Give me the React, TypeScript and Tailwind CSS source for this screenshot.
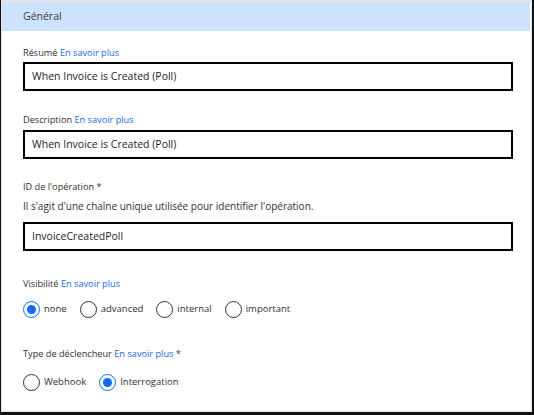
import React from "react";

const font = { fontFamily: '"Open Sans", "Noto Sans", sans-serif' };

const Link = () => <span className="text-[#1569e0]">En savoir plus</span>;

const TextField = ({ value }: { value: string }) => (
  <div className="h-[29px] w-[490px] border-2 border-black flex items-center px-[7px] text-[10.5px] text-[#201f1e]">
    {value}
  </div>
);

const Radio = ({ label, checked }: { label: string; checked?: boolean }) => (
  <label className="flex items-center gap-[4px] text-[9.5px] text-[#323130]">
    <span
      className={
        "w-[17px] h-[17px] rounded-full border-[1.5px] flex items-center justify-center " +
        (checked ? "border-[#0f6cf5]" : "border-[#323130]")
      }
    >
      {checked && <span className="w-[9px] h-[9px] rounded-full bg-[#0f6cf5]" />}
    </span>
    {label}
  </label>
);

export default function App() {
  return (
    <div
      className="w-[534px] h-[415px] bg-white border-l border-r-2 border-b-[3px] border-[#111]"
      style={font}
    >
      <div className="h-full border-t-2 border-l border-r border-b border-[#e4e4e4]">
        <div className="h-[29px] bg-[#cce2fd] mr-[1px] flex items-center pl-[21px] text-[10.5px] text-[#3b3a39]">
          Général
        </div>
        <div className="pl-[21px] text-[9.2px] text-[#323130]">
          <div className="mt-[14px] h-[16px] leading-[16px]">
            Résumé <Link />
          </div>
          <div className="mt-[1px]">
            <TextField value="When Invoice is Created (Poll)" />
          </div>

          <div className="mt-[21px] h-[16px] leading-[16px]">
            Description <Link />
          </div>
          <div className="mt-[2px]">
            <TextField value="When Invoice is Created (Poll)" />
          </div>

          <div className="mt-[20px] h-[16px] leading-[16px]">ID de l'opération *</div>
          <div className="mt-[3px] h-[16px] leading-[16px] text-[10px]">
            Il s'agit d'une chaîne unique utilisée pour identifier l'opération.
          </div>
          <div className="mt-[8px]">
            <TextField value="InvoiceCreatedPoll" />
          </div>

          <div className="mt-[25px] h-[16px] leading-[16px]">
            Visibilité <Link />
          </div>
          <div className="mt-[9px] flex items-center gap-[13px]">
            <Radio label="none" checked />
            <Radio label="advanced" />
            <Radio label="internal" />
            <Radio label="important" />
          </div>

          <div className="mt-[28px] h-[16px] leading-[16px]">
            Type de déclencheur <Link /> *
          </div>
          <div className="mt-[12px] flex items-center gap-[13px]">
            <Radio label="Webhook" />
            <Radio label="Interrogation" checked />
          </div>
        </div>
      </div>
    </div>
  );
}
